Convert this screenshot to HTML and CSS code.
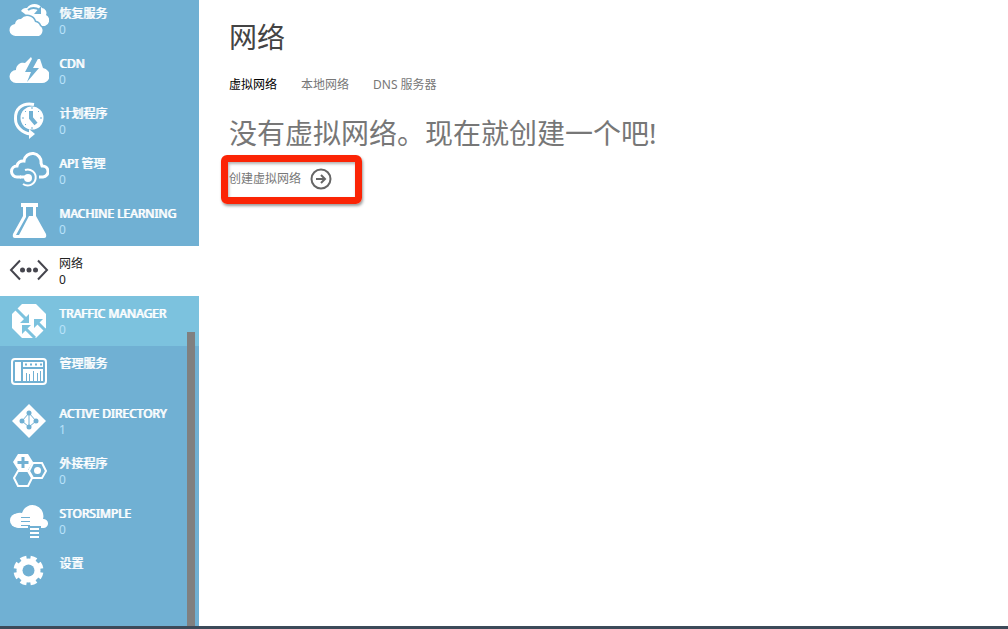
FILE: index.html
```html
<!DOCTYPE html>
<html lang="zh-CN">
<head>
    <meta charset="UTF-8">
    <meta name="viewport" content="width=device-width, initial-scale=1.0">
    <title>网络</title>
    <link rel="stylesheet" href="styles.css">
</head>
<body>
    <div class="portal">
        <nav class="sidebar">
            <ul class="services">
                <li><a class="service" href="#">
                    <svg class="icon" viewBox="0 0 40 40">
                        <path d="M12 10a6 6 0 0 1 6-3a9 9 0 0 1 15 0a5 5 0 0 1 4 7a6 6 0 0 1-1 11h-10l-10-12z"/>
                        <path class="cut-line thin" d="M19 9q5-4 12 0"/>
                        <path class="cut" d="M32 5v8h-7z"/>
                        <path class="outlined" d="M7 35a6 6 0 0 1-1-12a6 6 0 0 1 6-5a8 8 0 0 1 14 3a6 6 0 0 1 5 4a5.500 5.500 0 0 1-4 10z"/>
                    </svg>
                    <span class="text"><span class="name">恢复服务</span><span class="count">0</span></span>
                </a></li>
                <li><a class="service" href="#">
                    <svg class="icon" viewBox="0 0 40 40">
                        <path d="M7 32a6.500 6.500 0 0 1 0-13a7 7 0 0 1 9-7l6-6 1 2h6l2 0 3 9a7.500 7.500 0 0 1-2 15z"/>
                        <path class="cut" d="M24 6l-8 15h6l-4 10 12-14h-6l6-11z"/>
                    </svg>
                    <span class="text"><span class="name">CDN</span><span class="count">0</span></span>
                </a></li>
                <li><a class="service" href="#">
                    <svg class="icon" viewBox="0 0 40 40">
                        <circle cx="23" cy="17" r="11.500"/>
                        <path class="line" d="M25 3.500C12 1 6 9 6.500 18c0 8 7 14 15 15"/>
                        <path d="M20 28l6 5-6 5z"/>
                        <path class="cut-line thick" d="M22 10v7l5 6"/>
                        <path class="cut-line hair" d="M23 6v2M23 26v2M13 17h2M31 17h2M16 10l1 1M30 10l-1 1M16 24l1-1"/>
                    </svg>
                    <span class="text"><span class="name">计划程序</span><span class="count">0</span></span>
                </a></li>
                <li><a class="service" href="#">
                    <svg class="icon" viewBox="0 0 40 40">
                        <path class="line" d="M12 26H8a5.500 5.500 0 0 1 0-11a6 6 0 0 1 7-5a8.500 8.500 0 0 1 17 2l1 3a5.500 5.500 0 0 1 1 11h-4"/>
                        <path class="line thin" d="M16 19a8 8 0 1 1-2 14"/>
                        <circle cx="19" cy="27" r="4"/>
                        <path class="line" d="M11 26h8"/>
                    </svg>
                    <span class="text"><span class="name">API 管理</span><span class="count">0</span></span>
                </a></li>
                <li><a class="service" href="#">
                    <svg class="icon" viewBox="0 0 40 40">
                        <path d="M12 2h17v4h-2v9l10 18q1 4-2 4H6q-3 0-2-4l10-18V6h-2z"/>
                        <path class="cut" d="M17 6h7v9h-4L10 34H7l10-18z"/>
                    </svg>
                    <span class="text"><span class="name">MACHINE LEARNING</span><span class="count">0</span></span>
                </a></li>
                <li><a class="service current" href="#" aria-current="page">
                    <svg class="icon" viewBox="0 0 40 40">
                        <path class="line" d="M11 9.500L2 19l9 9.500M29 9.500L38 19l-9 9.500"/>
                        <circle cx="13.500" cy="19" r="2.500"/>
                        <circle cx="20" cy="19" r="2.500"/>
                        <circle cx="26.500" cy="19" r="2.500"/>
                    </svg>
                    <span class="text"><span class="name">网络</span><span class="count">0</span></span>
                </a></li>
                <li><a class="service hovered" href="#">
                    <svg class="icon" viewBox="0 0 40 40">
                        <path d="M13 3h14l10 10v14L27 37H13L3 27V13z"/>
                        <path class="cut-line" d="M7 8l12 12M38 31L27 20M26 37L16 27"/>
                        <path class="cut" d="M20 13v9h-9zM25 18h9l-9 9zM13 24h9l-9 9z"/>
                    </svg>
                    <span class="text"><span class="name">TRAFFIC MANAGER</span><span class="count">0</span></span>
                </a></li>
                <li><a class="service" href="#">
                    <svg class="icon" viewBox="0 0 40 40">
                        <rect class="line thin" x="3" y="8" width="34" height="25" rx="3"/>
                        <path d="M6 11h6v19H6zM14 11h20v5H14zM14 18h20v12H14z"/>
                        <path class="cut-line hair" d="M17.500 22v8M20.500 23v7M24.500 20v10M28.500 22v8M31.500 20v10"/>
                        <path class="cut-line thin" stroke-dasharray="2 3" d="M16 13.500h18"/>
                    </svg>
                    <span class="text"><span class="name">管理服务</span></span>
                </a></li>
                <li><a class="service" href="#">
                    <svg class="icon" viewBox="0 0 40 40">
                        <path d="M20 3l17 17-17 17L3 20z"/>
                        <path class="cut-line hair" d="M20 12l-7 8 7 6 7-6zM20 12v14"/>
                        <circle class="cut" cx="20" cy="12" r="2.500"/>
                        <circle class="cut" cx="13" cy="20" r="2.500"/>
                        <circle class="cut" cx="27" cy="20" r="2.500"/>
                        <circle class="cut" cx="20" cy="26" r="2.500"/>
                    </svg>
                    <span class="text"><span class="name">ACTIVE DIRECTORY</span><span class="count">1</span></span>
                </a></li>
                <li><a class="service" href="#">
                    <svg class="icon" viewBox="0 0 40 40">
                        <path d="M9 3h10l5 8-5 8H9l-5-8z"/>
                        <path class="cut-line" d="M14 6v11M8.500 11.500h11"/>
                        <path class="line thin" d="M24 12h9l4 8-4 7h-9l-4-7zM9 20h10l4 7-4 8H9l-4-8z"/>
                        <circle cx="28.500" cy="19.500" r="3.500"/>
                    </svg>
                    <span class="text"><span class="name">外接程序</span><span class="count">0</span></span>
                </a></li>
                <li><a class="service" href="#">
                    <svg class="icon" viewBox="0 0 40 40">
                        <path d="M9 27a7.500 7.500 0 1 1 4-15 10.500 10.500 0 1 1 21 6 4.500 4.500 0 0 1 1 9z"/>
                        <circle cx="8" cy="19.500" r="7"/>
                        <path class="cut" d="M19 25h13v13H19z"/>
                        <path class="cut-line hair" d="M12 16.500h9M12 20.500h9M12 24.500h9"/>
                        <path class="line thin" d="M21 28h9M21 32h9M21 36h9"/>
                        <path d="M21 20h9v5h-9z"/>
                    </svg>
                    <span class="text"><span class="name">STORSIMPLE</span><span class="count">0</span></span>
                </a></li>
                <li><a class="service" href="#">
                    <svg class="icon" viewBox="0 0 40 40">
                        <circle cx="19.500" cy="19.500" r="12"/>
                        <circle class="teeth" cx="19.500" cy="19.500" r="12.500" pathLength="80"/>
                        <circle class="cut" cx="19.500" cy="19.500" r="6"/>
                    </svg>
                    <span class="text"><span class="name">设置</span></span>
                </a></li>
            </ul>
            <div class="scroll-thumb"></div>
        </nav>

        <main class="content">
            <h1>网络</h1>
            <nav class="tabs">
                <a class="selected" href="#">虚拟网络</a>
                <a href="#">本地网络</a>
                <a href="#">DNS 服务器</a>
            </nav>
            <p class="message">没有虚拟网络。现在就创建一个吧!</p>
            <div class="create-row">
                <a class="create" href="#">
                    <span>创建虚拟网络</span>
                    <svg class="arrow" viewBox="0 0 22 22">
                        <circle cx="11" cy="11" r="9.500"/>
                        <path d="M6 11h9M11 7l4 4-4 4"/>
                    </svg>
                </a>
                <div class="highlight"></div>
            </div>
        </main>
    </div>
    <footer class="bottom-bar"></footer>
</body>
</html>
```

FILE: styles.css
```css
* {
    box-sizing: border-box;
}
body {
    display: flex;
    flex-direction: column;
    height: 100vh;
    margin: 0;
    overflow: hidden;
    background: #fff;
    font-family: "Noto Sans", "Noto Sans CJK SC", sans-serif;
    font-size: 12px;
    line-height: 16px;
}
a {
    color: inherit;
    text-decoration: none;
}
.portal {
    display: flex;
    flex: 1;
    min-height: 0;
}

/* sidebar */
.sidebar {
    --back: #70b0d3;
    position: relative;
    flex: 0 0 199px;
    overflow: hidden;
    background: var(--back);
    color: #fff;
}
.services {
    list-style: none;
    margin: -4px 0 0;
    padding: 0;
}
.service {
    display: flex;
    gap: 10px;
    height: 50px;
    padding: 5px 9px;
    background: var(--back);
}
.service.hovered {
    --back: #7cc2de;
}
.service.current {
    --back: #fff;
    color: #222;
}
.text {
    display: flex;
    flex-direction: column;
    padding-top: 5px;
    white-space: nowrap;
}
.name {
    text-shadow: 1px 0 0 currentColor;
}
.count {
    color: #b9e2fa;
}
.current .name {
    text-shadow: none;
}
.current .count {
    color: inherit;
}
.scroll-thumb {
    position: absolute;
    top: 332px;
    right: 4px;
    bottom: 0;
    width: 8px;
    background: #808080;
}

/* icons */
.icon {
    flex: none;
    width: 40px;
    height: 40px;
    fill: currentColor;
}
.current .icon {
    color: #45454d;
}
.line {
    fill: none;
    stroke: currentColor;
    stroke-width: 3;
}
.cut {
    fill: var(--back);
}
.cut-line {
    fill: none;
    stroke: var(--back);
    stroke-width: 3;
}
.outlined {
    stroke: var(--back);
    stroke-width: 3;
    paint-order: stroke;
}
.teeth {
    fill: none;
    stroke: currentColor;
    stroke-width: 5;
    stroke-dasharray: 6 4;
    stroke-dashoffset: -2;
}
.thick {
    stroke-width: 4;
}
.thin {
    stroke-width: 2;
}
.hair {
    stroke-width: 1;
}
.current .line {
    stroke-width: 2;
}

/* content */
.content {
    flex: 1;
    padding: 17px 30px;
    color: #777;
}
h1 {
    margin: 0;
    color: #444;
    font-size: 28px;
    font-weight: 400;
    line-height: 40px;
}
.tabs {
    display: flex;
    gap: 24px;
    margin-top: 20px;
}
.selected {
    color: #000;
}
.message {
    margin: 20px 0 0;
    font-size: 28px;
    line-height: 40px;
}
.create-row {
    position: relative;
    display: flex;
    margin-top: 15px;
}
.create {
    display: flex;
    align-items: center;
    gap: 9px;
}
.arrow {
    width: 22px;
    height: 22px;
    fill: none;
    stroke: #666;
    stroke-width: 2;
}
.highlight {
    position: absolute;
    top: -13px;
    left: -8px;
    width: 141px;
    height: 49px;
    border: 7px solid #fb2405;
    border-radius: 6px;
    box-shadow: 1px 2px 3px rgba(0,0,0,0.4), inset 1px 2px 3px rgba(0,0,0,0.3);
    pointer-events: none;
}

/* bottom bar */
.bottom-bar {
    flex: none;
    height: 3px;
    background: #3c4a59;
}
```
